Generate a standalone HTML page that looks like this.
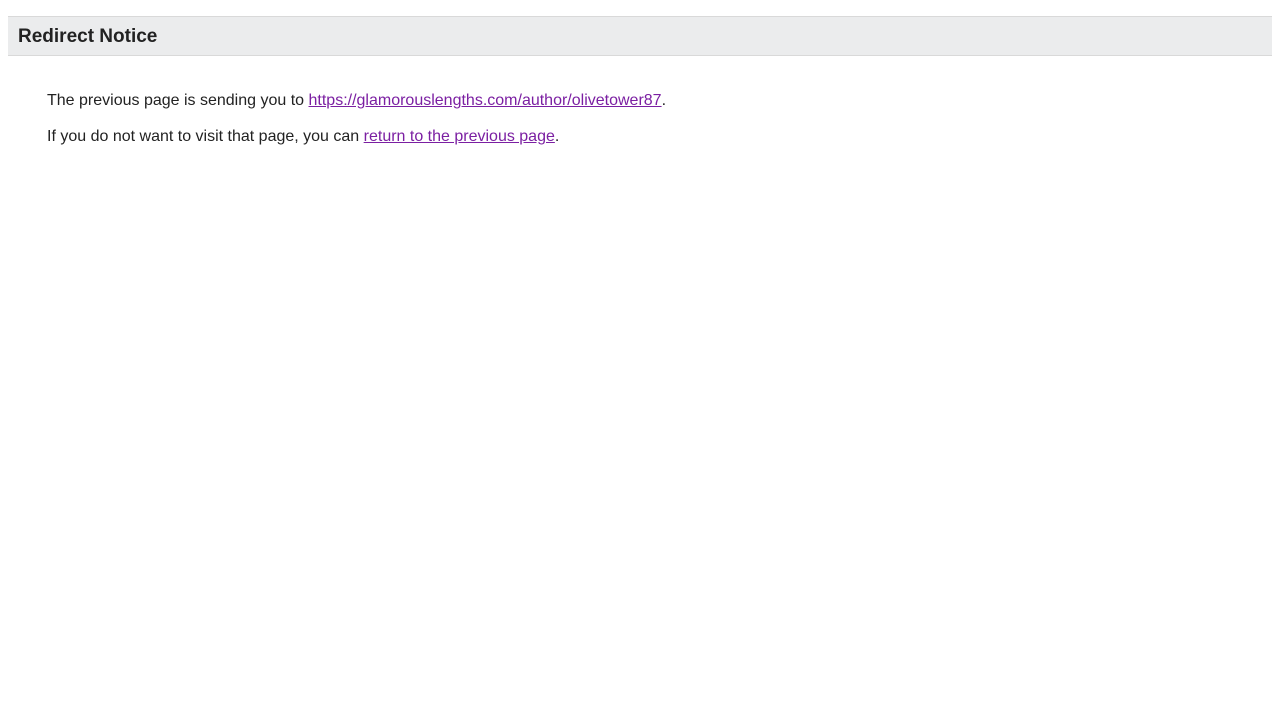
<!DOCTYPE html>
<html><head><meta charset="utf-8"><style>
body{margin:0;background:#fff;font-family:"Liberation Sans",Arial,sans-serif;color:#222;}
.bar{position:absolute;left:8px;top:16px;width:1264px;height:38px;background:#ebeced;border-top:1px solid #d9d9d9;border-bottom:1px solid #d9d9d9;}
.bar div{position:absolute;left:10px;top:9px;font-size:19px;font-weight:bold;color:#222;}
p{position:absolute;left:47px;margin:0;font-size:16px;}
a{color:#7b1fa2;text-decoration:underline;}
</style></head><body>
<div class="bar"><div>Redirect Notice</div></div>
<p style="top:92px">The previous page is sending you to <a>https://glamorouslengths.com/author/olivetower87</a>.</p>
<p style="top:128px">If you do not want to visit that page, you can <a>return to the previous page</a>.</p>
</body></html>
